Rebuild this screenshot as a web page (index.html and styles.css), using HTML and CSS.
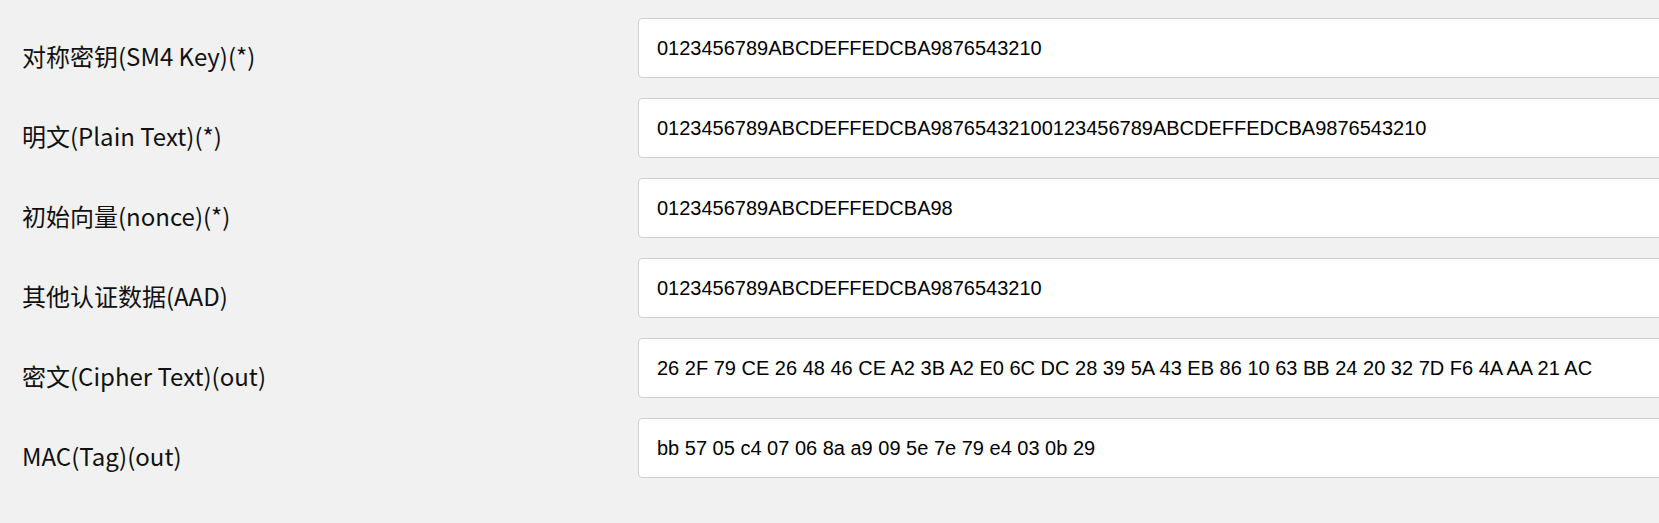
FILE: index.html
```html
<!DOCTYPE html>
<html lang="zh">
<head>
<meta charset="utf-8">
<link rel="stylesheet" href="styles.css">
</head>
<body>
<form class="form">
  <div class="row">
    <label class="label">对称密钥(SM4 Key)(*)</label>
    <input class="field" type="text" value="0123456789ABCDEFFEDCBA9876543210">
  </div>
  <div class="row">
    <label class="label">明文(Plain Text)(*)</label>
    <input class="field" type="text" value="0123456789ABCDEFFEDCBA98765432100123456789ABCDEFFEDCBA9876543210">
  </div>
  <div class="row">
    <label class="label">初始向量(nonce)(*)</label>
    <input class="field" type="text" value="0123456789ABCDEFFEDCBA98">
  </div>
  <div class="row">
    <label class="label">其他认证数据(AAD)</label>
    <input class="field" type="text" value="0123456789ABCDEFFEDCBA9876543210">
  </div>
  <div class="row">
    <label class="label">密文(Cipher Text)(out)</label>
    <input class="field" type="text" value="26 2F 79 CE 26 48 46 CE A2 3B A2 E0 6C DC 28 39 5A 43 EB 86 10 63 BB 24 20 32 7D F6 4A AA 21 AC">
  </div>
  <div class="row">
    <label class="label">MAC(Tag)(out)</label>
    <input class="field" type="text" value="bb 57 05 c4 07 06 8a a9 09 5e 7e 79 e4 03 0b 29">
  </div>
</form>
</body>
</html>
```

FILE: styles.css
```css
html, body {
  margin: 0;
  padding: 0;
  background: #f1f1f1;
  overflow: hidden;
}
.form {
  display: flex;
  flex-direction: column;
  gap: 20px;
  padding-top: 18px;
  width: 1800px;
}
.row {
  display: flex;
  align-items: center;
  height: 60px;
}
.label {
  box-sizing: border-box;
  width: 638px;
  flex: none;
  padding-left: 22px;
  padding-top: 15px;
  font-family: "Noto Sans CJK SC", "Noto Sans", sans-serif;
  font-size: 24px;
  color: #111;
}
.field {
  box-sizing: border-box;
  width: 1100px;
  height: 60px;
  margin: 0;
  padding: 0 18px;
  border: 1px solid #cfcfcf;
  border-radius: 4px;
  background: #fff;
  font-family: "Liberation Sans", Arial, sans-serif;
  font-size: 20px;
  color: #000;
  outline: none;
}
```
